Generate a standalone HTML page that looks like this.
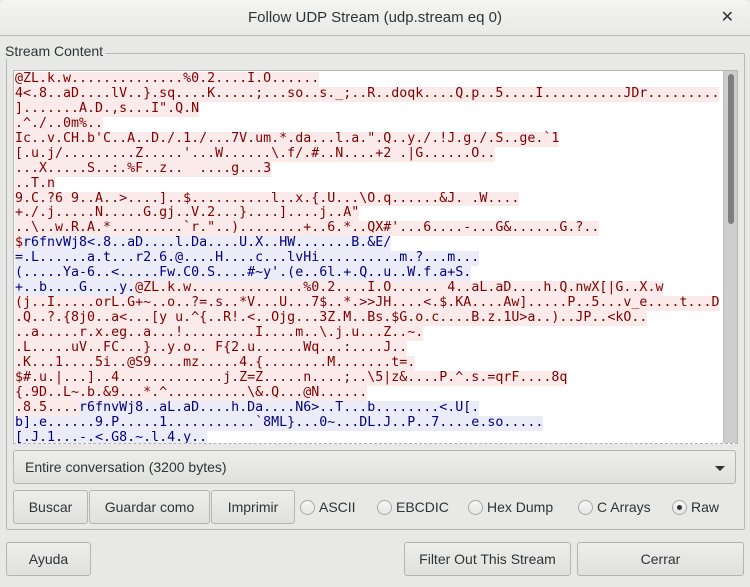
<!DOCTYPE html>
<html><head><meta charset="utf-8"><style>
*{box-sizing:border-box;margin:0;padding:0}
body{width:750px;height:587px;overflow:hidden;background:#e8e8e7;font-family:"Liberation Sans","DejaVu Sans",sans-serif;font-size:14px;color:#2e3436;position:relative}
.title{position:absolute;left:0;top:0;width:750px;height:36px;background:linear-gradient(#f4f4f3,#e9e9e8);border-bottom:1px solid #bdbdbb;border-radius:6px 6px 0 0;text-align:center;line-height:36px;font-size:15px;color:#2e3436}
.x{position:absolute;right:16px;top:0;font-size:16px;font-weight:bold}
.group{position:absolute;left:6px;top:53px;width:739px;height:477px;border:1px solid #b8b8b6;border-radius:2px}
.glabel{position:absolute;left:5px;top:43px;background:#e8e8e7;padding-right:2px;font-size:14px;color:#2e3436}
.text{position:absolute;left:13px;top:70px;width:725px;height:374px;background:#fff;border:1px solid #b6b6b3;overflow:hidden;border-bottom:1px dashed #b0b0b0}
.lines{position:absolute;left:1px;top:1px;font-family:"DejaVu Sans Mono","Liberation Mono",monospace;font-size:13.3px;line-height:14.95px;white-space:pre}
.lines div{height:14.95px}
.lines span{display:inline-block;height:14.95px;vertical-align:top}
.r{color:#7f0000;background:#fbeaea}
.b{color:#00007f;background:#ececf9}
.sb{position:absolute;left:709px;top:0;width:14px;height:374px;background:#cecece;border-left:1px solid #bdbdbd}
.th{position:absolute;left:4px;top:3px;width:6px;height:150px;background:#7e7e7e;border-radius:3px}
.btn{position:absolute;height:34px;border:1px solid #b4b4b2;border-radius:3px;background:linear-gradient(#ededec,#e0e0de);text-align:center;line-height:32px;font-size:14px;color:#2e3436}
.combo{position:absolute;left:13px;top:450px;width:723px;height:34px;border:1px solid #b4b4b2;border-radius:3px;background:linear-gradient(#ededec,#e0e0de);line-height:32px;padding-left:11px}
.arr{position:absolute;right:10px;top:15px;width:0;height:0;border-left:5px solid transparent;border-right:5px solid transparent;border-top:5px solid #2e3436}
.rad{position:absolute;top:498px;font-size:14px;line-height:18px}
.rad i{display:inline-block;width:15px;height:15px;border:1px solid #a8a8a6;border-radius:50%;background:linear-gradient(#f7f7f7,#e6e6e6);vertical-align:-3px;margin-right:4px;position:relative}
.rad i.on:after{content:"";position:absolute;left:4px;top:4px;width:5px;height:5px;border-radius:50%;background:#2e3436}
</style></head><body>
<div class="title">Follow UDP Stream (udp.stream eq 0)<span class="x">✕</span></div>
<div class="group"></div>
<div class="glabel">Stream Content</div>
<div class="text"><div class="lines"><div><span class="r">@ZL.k.w..............%0.2....I.O......</span></div><div><span class="r">4&lt;.8..aD....lV..}.sq....K.....;...so..s._;..R..doqk....Q.p..5....I..........JDr.........</span></div><div><span class="r">].......A.D.,s...I".Q.N</span></div><div><span class="r">.^./..0m%..</span></div><div><span class="r">Ic..v.CH.b'C..A..D./.1./...7V.um.*.da...l.a.".Q..y./.!J.g./.S..ge.`1</span></div><div><span class="r">[.u.j/.........Z.....'...W......\.f/.#..N....+2 .|G......O..</span></div><div><span class="r">...X.....S..:.%F..z..  ....g...3</span></div><div><span class="r">..T.n</span></div><div><span class="r">9.C.?6 9..A..&gt;....]..$..........l..x.{.U...\O.q......&amp;J. .W....</span></div><div><span class="r">+./.j.....N.....G.gj..V.2...}....]....j..A"</span></div><div><span class="r">..\..w.R.A.*.........`r."..)........+..6.*..QX#'...6....-...G&amp;......G.?..</span></div><div><span class="r">$</span><span class="b">r6fnvWj8&lt;.8..aD....l.Da....U.X..HW.......B.&amp;E/</span></div><div><span class="b">=.L......a.t...r2.6.@....H....c...lvHi..........m.?...m...</span></div><div><span class="b">(.....Ya-6..&lt;.....Fw.C0.S....#~y'.(e..6l.+.Q..u..W.f.a+S.</span></div><div><span class="b">+..b....G....y.</span><span class="r">@ZL.k.w..............%0.2....I.O...... 4..aL.aD....h.Q.nwX[|G..X.w</span></div><div><span class="r">(j..I.....orL.G+~..o..?=.s..*V...U...7$..*.&gt;&gt;JH....&lt;.$.KA....Aw].....P..5...v_e....t...D</span></div><div><span class="r">.Q..?.{8j0..a&lt;...[y u.^{..R!.&lt;..Ojg...3Z.M..Bs.$G.o.c....B.z.1U&gt;a..)..JP..&lt;kO..</span></div><div><span class="r">..a.....r.x.eg..a...!.........I....m..\.j.u...Z..~.</span></div><div><span class="r">.L.....uV..FC...}..y.o.. F{2.u......Wq...:....J..</span></div><div><span class="r">.K...1....5i..@S9....mz.....4.{........M.......t=.</span></div><div><span class="r">$#.u.|...]..4.............j.Z=Z.....n....;..\5|z&amp;....P.^.s.=qrF....8q</span></div><div><span class="r">{.9D..L~.b.&amp;9...*.^..........\&amp;.Q...@N......</span></div><div><span class="r">.8.5....</span><span class="b">r6fnvWj8..aL.aD....h.Da....N6&gt;..T...b........&lt;.U[.</span></div><div><span class="b">b].e......9.P.....1...........`8ML}...0~...DL.J..P..7....e.so.....</span></div><div><span class="b">[.J.1...-.&lt;.G8.~.l.4.y..</span></div></div>
<div class="sb"><div class="th"></div></div></div>
<div class="combo">Entire conversation (3200 bytes)<div class="arr"></div></div>
<div class="btn" style="left:13px;top:490px;width:75px">Buscar</div>
<div class="btn" style="left:89px;top:490px;width:121px">Guardar como</div>
<div class="btn" style="left:211px;top:490px;width:84px">Imprimir</div>
<div class="rad" style="left:300px"><i></i>ASCII</div>
<div class="rad" style="left:377px"><i></i>EBCDIC</div>
<div class="rad" style="left:468px"><i></i>Hex Dump</div>
<div class="rad" style="left:578px"><i></i>C Arrays</div>
<div class="rad" style="left:672px"><i class="on"></i>Raw</div>
<div class="btn" style="left:6px;top:542px;width:85px">Ayuda</div>
<div class="btn" style="left:404px;top:542px;width:167px">Filter Out This Stream</div>
<div class="btn" style="left:577px;top:542px;width:167px">Cerrar</div>
</body></html>
